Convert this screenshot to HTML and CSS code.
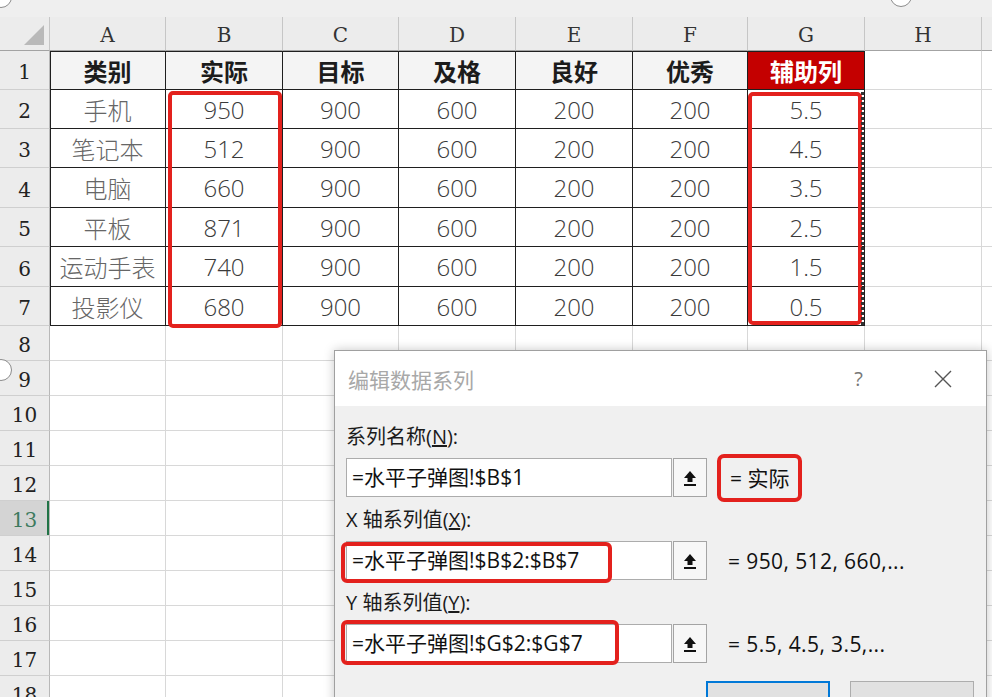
FILE: index.html
```html
<!DOCTYPE html>
<html lang="zh-CN">
<head>
    <meta charset="UTF-8">
    <meta name="viewport" content="width=device-width, initial-scale=1.0">
    <title>编辑数据系列</title>
    <link rel="stylesheet" href="styles.css">
</head>
<body>

<div class="sheet">
    <div class="ribbon-edge"></div>

    <table class="grid">
        <colgroup>
            <col class="w-rh">
            <col class="w116"><col class="w117"><col class="w116"><col class="w117">
            <col class="w117"><col class="w115"><col class="w117"><col class="w117">
            <col class="w-rest">
        </colgroup>
        <thead>
            <tr>
                <th class="corner"><span class="corner-tri"></span></th>
                <th>A</th><th>B</th><th>C</th><th>D</th><th>E</th><th>F</th><th>G</th><th>H</th><th></th>
            </tr>
        </thead>
        <tbody>
            <!-- data block A1:G7 -->
            <tr class="h39 top">
                <th>1</th>
                <td class="d hd first">类别</td>
                <td class="d hd">实际</td>
                <td class="d hd">目标</td>
                <td class="d hd">及格</td>
                <td class="d hd">良好</td>
                <td class="d hd">优秀</td>
                <td class="d hd aux">辅助列</td>
                <td></td><td></td>
            </tr>
            <tr class="h39">
                <th>2</th>
                <td class="d first name">手机</td><td class="d">950</td><td class="d">900</td><td class="d">600</td><td class="d">200</td><td class="d">200</td><td class="d">5.5</td>
                <td></td><td></td>
            </tr>
            <tr class="h39">
                <th>3</th>
                <td class="d first name">笔记本</td><td class="d">512</td><td class="d">900</td><td class="d">600</td><td class="d">200</td><td class="d">200</td><td class="d">4.5</td>
                <td></td><td></td>
            </tr>
            <tr class="h40">
                <th>4</th>
                <td class="d first name">电脑</td><td class="d">660</td><td class="d">900</td><td class="d">600</td><td class="d">200</td><td class="d">200</td><td class="d">3.5</td>
                <td></td><td></td>
            </tr>
            <tr class="h39">
                <th>5</th>
                <td class="d first name">平板</td><td class="d">871</td><td class="d">900</td><td class="d">600</td><td class="d">200</td><td class="d">200</td><td class="d">2.5</td>
                <td></td><td></td>
            </tr>
            <tr class="h40">
                <th>6</th>
                <td class="d first name">运动手表</td><td class="d">740</td><td class="d">900</td><td class="d">600</td><td class="d">200</td><td class="d">200</td><td class="d">1.5</td>
                <td></td><td></td>
            </tr>
            <tr class="h39">
                <th>7</th>
                <td class="d first name">投影仪</td><td class="d">680</td><td class="d">900</td><td class="d">600</td><td class="d">200</td><td class="d">200</td><td class="d">0.5</td>
                <td></td><td></td>
            </tr>

            <!-- empty rows -->
            <tr class="h35"><th>8</th><td></td><td></td><td></td><td></td><td></td><td></td><td></td><td></td><td></td></tr>
            <tr class="h35"><th>9</th><td></td><td></td><td></td><td></td><td></td><td></td><td></td><td></td><td></td></tr>
            <tr class="h35"><th>10</th><td></td><td></td><td></td><td></td><td></td><td></td><td></td><td></td><td></td></tr>
            <tr class="h35"><th>11</th><td></td><td></td><td></td><td></td><td></td><td></td><td></td><td></td><td></td></tr>
            <tr class="h35"><th>12</th><td></td><td></td><td></td><td></td><td></td><td></td><td></td><td></td><td></td></tr>
            <tr class="h35"><th class="active">13</th><td></td><td></td><td></td><td></td><td></td><td></td><td></td><td></td><td></td></tr>
            <tr class="h35"><th>14</th><td></td><td></td><td></td><td></td><td></td><td></td><td></td><td></td><td></td></tr>
            <tr class="h35"><th>15</th><td></td><td></td><td></td><td></td><td></td><td></td><td></td><td></td><td></td></tr>
            <tr class="h35"><th>16</th><td></td><td></td><td></td><td></td><td></td><td></td><td></td><td></td><td></td></tr>
            <tr class="h35"><th>17</th><td></td><td></td><td></td><td></td><td></td><td></td><td></td><td></td><td></td></tr>
            <tr class="h35"><th>18</th><td></td><td></td><td></td><td></td><td></td><td></td><td></td><td></td><td></td></tr>
        </tbody>
    </table>

    <!-- highlight frames over the ranges used by the series -->
    <div class="mark mark-b"></div>
    <div class="mark mark-g"></div>
    <div class="ants"></div>

    <!-- chart resize handles -->
    <div class="handle handle-tl"></div>
    <div class="handle handle-l"></div>
    <div class="handle handle-t"></div>
</div>

<div class="dialog">
    <div class="dlg-title">
        <span class="dlg-caption">编辑数据系列</span>
        <span class="dlg-help">?</span>
        <span class="dlg-close">
            <svg width="20" height="20" viewBox="0 0 20 20">
                <path d="M2 2 L18 18 M18 2 L2 18" stroke="#555" stroke-width="1.4" fill="none"/>
            </svg>
        </span>
    </div>

    <div class="dlg-body">
        <div class="field">
            <div class="field-label">系列名称(<u>N</u>):</div>
            <div class="field-row">
                <div class="ref-input">=水平子弹图!$B$1</div>
                <button class="collapse-btn">
                    <svg width="16" height="18" viewBox="0 0 16 18">
                        <path d="M8 2 L14 9 H10.5 V13 H5.5 V9 H2 Z" fill="#111"/>
                        <rect x="2" y="15" width="12" height="2" fill="#111"/>
                    </svg>
                </button>
                <div class="ref-value boxed">= 实际</div>
            </div>
        </div>

        <div class="field">
            <div class="field-label">X 轴系列值(<u>X</u>):</div>
            <div class="field-row">
                <div class="ref-input">=水平子弹图!$B$2:$B$7<span class="hl hl-x"></span></div>
                <button class="collapse-btn">
                    <svg width="16" height="18" viewBox="0 0 16 18">
                        <path d="M8 2 L14 9 H10.5 V13 H5.5 V9 H2 Z" fill="#111"/>
                        <rect x="2" y="15" width="12" height="2" fill="#111"/>
                    </svg>
                </button>
                <div class="ref-value">= 950, 512, 660,...</div>
            </div>
        </div>

        <div class="field">
            <div class="field-label">Y 轴系列值(<u>Y</u>):</div>
            <div class="field-row">
                <div class="ref-input">=水平子弹图!$G$2:$G$7<span class="hl hl-y"></span></div>
                <button class="collapse-btn">
                    <svg width="16" height="18" viewBox="0 0 16 18">
                        <path d="M8 2 L14 9 H10.5 V13 H5.5 V9 H2 Z" fill="#111"/>
                        <rect x="2" y="15" width="12" height="2" fill="#111"/>
                    </svg>
                </button>
                <div class="ref-value">= 5.5, 4.5, 3.5,...</div>
            </div>
        </div>

        <!-- OK / Cancel, only their top edge is on screen -->
        <div class="dlg-buttons">
            <button class="btn primary" aria-label="确定"></button>
            <button class="btn" aria-label="取消"></button>
        </div>
    </div>
</div>

</body>
</html>
```

FILE: styles.css
```css
body {
    margin: 0;
    width: 992px;
    height: 697px;
    overflow: hidden;
    position: relative;
    background: #fff;
    font-family: "Noto Sans CJK SC", sans-serif;
}

/* ---------- worksheet ---------- */
.sheet {
    position: relative;
}

.ribbon-edge {
    height: 17px;
    background: #efefef;
}

.grid {
    border-collapse: separate;
    border-spacing: 0;
    table-layout: fixed;
    width: 1042px;
}

.w-rh { width: 50px; }
.w115 { width: 115px; }
.w116 { width: 116px; }
.w117 { width: 117px; }
.w-rest { width: 60px; }

.grid th,
.grid td {
    padding: 0;
    box-sizing: border-box;
    border-right: 1px solid #d8d8d8;
    border-bottom: 1px solid #d8d8d8;
    text-align: center;
    white-space: nowrap;
    overflow: hidden;
}

.grid thead th {
    height: 34px;
    padding-top: 3px;
    background: #ececec;
    font-family: "DejaVu Serif", serif;
    font-size: 20px;
    font-weight: normal;
    color: #333;
    border-right-color: #c6c6c6;
    border-bottom-color: #a3a3a3;
}

.grid th.corner {
    text-align: right;
    vertical-align: bottom;
    padding: 0 5px 5px 0;
}

.corner-tri {
    display: inline-block;
    width: 20px;
    height: 20px;
    background: #b9b9b9;
    clip-path: polygon(100% 0, 100% 100%, 0 100%);
    vertical-align: bottom;
}

.grid tbody th {
    padding-top: 4px;
    background: #ececec;
    font-family: "DejaVu Serif", serif;
    font-size: 20px;
    font-weight: normal;
    color: #222;
    border-right-color: #b8b8b8;
    border-bottom-color: #cfcfcf;
}

.grid tbody th.active {
    background: #d4d4d4;
    color: #3d7a5e;
    box-shadow: inset -2px 0 #217346;
}

.h35 { height: 35px; }
.h39 { height: 39px; }
.h40 { height: 40px; }

/* bordered data block */
.grid td.d {
    border-right-color: #1f1f1f;
    border-bottom-color: #1f1f1f;
    font-family: "Open Sans", "Noto Sans CJK SC", sans-serif;
    font-weight: 300;
    font-size: 24px;
    color: #3a3a3a;
}

.grid td.d.first {
    box-shadow: inset 1px 0 #1f1f1f;
}

.grid tr.top td.d {
    box-shadow: inset 0 1px #1f1f1f;
}

.grid tr.top td.d.first {
    box-shadow: inset 1px 1px #1f1f1f;
}

.grid td.name {
    font-family: "Noto Sans CJK SC", sans-serif;
    color: #666;
}

.grid td.hd {
    background: #f4f4f4;
    font-family: "Noto Sans CJK SC", sans-serif;
    font-weight: 700;
    color: #1c1c1c;
}

.grid td.aux {
    background: #c40000;
    color: #fff;
}

/* red frames around B2:B7 and G2:G7 */
.mark {
    position: absolute;
    box-sizing: border-box;
    border: 4px solid #e3211d;
    border-radius: 5px;
}

.mark-b {
    left: 168px;
    top: 91px;
    width: 114px;
    height: 237px;
}

.mark-g {
    left: 748px;
    top: 92px;
    width: 114px;
    height: 233px;
}

/* copy selection border */
.ants {
    position: absolute;
    left: 861px;
    top: 92px;
    width: 3px;
    height: 234px;
    background: repeating-linear-gradient(180deg, #333 0 3px, transparent 3px 5px);
}

.handle {
    position: absolute;
    width: 22px;
    height: 22px;
    box-sizing: border-box;
    border-radius: 50%;
    background: #fff;
    border: 1px solid #8c8c8c;
}

.handle-tl { left: -10px; top: -14px; }
.handle-l { left: -10px; top: 359px; }
.handle-t { left: 890px; top: -15px; }

/* ---------- dialog ---------- */
.dialog {
    position: absolute;
    left: 334px;
    top: 350px;
    width: 653px;
    height: 380px;
    box-sizing: border-box;
    background: #f0f0f0;
    border: 1px solid #a0a0a0;
    box-shadow: 0 0 10px rgba(0, 0, 0, 0.22);
}

.dlg-title {
    height: 55px;
    background: #fff;
    display: flex;
    align-items: center;
}

.dlg-caption {
    flex: 1;
    padding-left: 13px;
    font-size: 21px;
    color: #a8a8a8;
}

.dlg-help {
    font-family: "Open Sans", sans-serif;
    font-size: 20px;
    color: #777;
}

.dlg-close {
    display: flex;
    margin-left: 70px;
    margin-right: 33px;
}

.dlg-body {
    padding: 16px 0 0 11px;
}

.field {
    margin-bottom: 8px;
}

.field-label {
    height: 30px;
    line-height: 30px;
    margin-bottom: 6px;
    font-family: "Open Sans", "Noto Sans CJK SC", sans-serif;
    font-size: 20px;
    color: #1b1b1b;
}

.field-row {
    height: 39px;
    display: flex;
    align-items: center;
}

.ref-input {
    position: relative;
    width: 326px;
    height: 39px;
    box-sizing: border-box;
    padding-left: 5px;
    border: 1px solid #acacac;
    background: #fff;
    font-family: "Open Sans", "Noto Sans CJK SC", sans-serif;
    font-size: 21px;
    line-height: 37px;
    color: #111;
    white-space: nowrap;
}

.collapse-btn {
    width: 34px;
    height: 39px;
    margin: 0 0 0 1px;
    padding: 0;
    box-sizing: border-box;
    border: 1px solid #a4a4a4;
    background: #f7f7f7;
    display: flex;
    align-items: center;
    justify-content: center;
}

.ref-value {
    margin-left: 21px;
    font-family: "Open Sans", "Noto Sans CJK SC", sans-serif;
    font-size: 21px;
    letter-spacing: 0.4px;
    color: #111;
    white-space: nowrap;
}

.ref-value.boxed {
    margin-left: 10px;
    height: 48px;
    line-height: 40px;
    box-sizing: border-box;
    padding: 0 9px;
    border: 4px solid #e3211d;
    border-radius: 7px;
    letter-spacing: 0;
}

.hl {
    position: absolute;
    box-sizing: border-box;
    border: 4px solid #e3211d;
    border-radius: 6px;
}

.hl-x {
    left: -6px;
    top: 0;
    width: 271px;
    height: 41px;
}

.hl-y {
    left: -6px;
    top: -5px;
    width: 278px;
    height: 45px;
}

.dlg-buttons {
    display: flex;
    gap: 20px;
    margin-top: 18px;
    padding-left: 360px;
}

.btn {
    width: 124px;
    height: 36px;
    box-sizing: border-box;
    background: #e1e1e1;
    border: 1px solid #adadad;
}

.btn.primary {
    border: 2px solid #0078d7;
}
```
